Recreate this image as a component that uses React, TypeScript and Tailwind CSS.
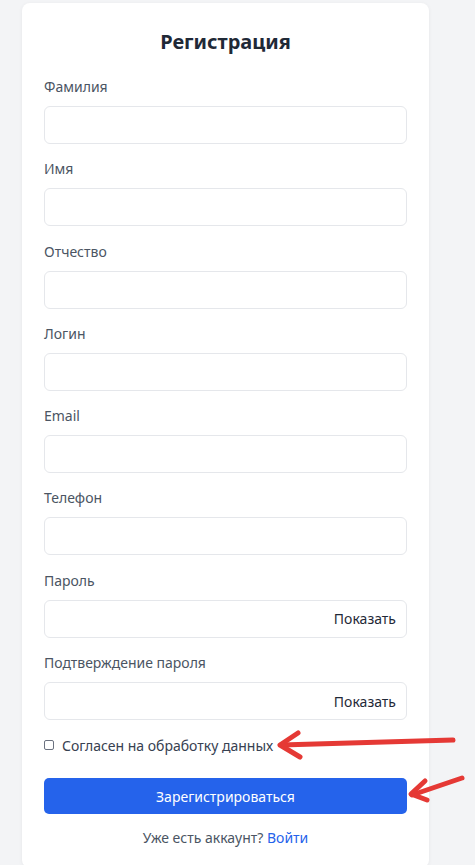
import React from "react";

const fields = ["Фамилия", "Имя", "Отчество", "Логин", "Email", "Телефон"];

function Field({ label, password }: { label: string; password?: boolean }) {
  return (
    <div className="flex flex-col mb-[15.3px]">
      <label className="text-[14px] leading-[20px] text-[#4b5563] mb-[9px]">{label}</label>
      <div className="h-[38px] w-full rounded-[6px] border border-[#e5e7eb] bg-white flex items-center justify-end pr-[10px]">
        {password && <span className="text-[14px] text-[#1f2937]">Показать</span>}
      </div>
    </div>
  );
}

export default function App() {
  return (
    <div
      className="relative min-h-[865px] w-[475px] bg-[#f3f4f6] overflow-hidden"
      style={{ fontFamily: '"Noto Sans", "Open Sans", sans-serif' }}
    >
      <div className="ml-[22px] mt-[3px] w-[407px] bg-white rounded-[8px] shadow-[0_1px_4px_rgba(0,0,0,0.06)] px-[22px] pt-[25px] pb-[20px]">
        <h1 className="text-center text-[20px] leading-[28px] font-bold text-[#1f2937] mb-[21px]">Регистрация</h1>
        {fields.map((f) => (
          <Field key={f} label={f} />
        ))}
        <Field label="Пароль" password />
        <Field label="Подтверждение пароля" password />
        <div className="flex items-center h-[20px] mt-[1px]">
          <span className="w-[10px] h-[10px] border border-[#6b7280] rounded-[2px] mr-[8px] ml-[0px]" />
          <span className="text-[14px] text-[#374151]">Согласен на обработку данных</span>
        </div>
        <button className="mt-[23px] w-full h-[36px] rounded-[5px] bg-[#2563eb] text-white text-[14px] flex items-center justify-center">
          Зарегистрироваться
        </button>
        <div className="mt-[14px] text-center text-[14px] leading-[20px] text-[#4b5563]">
          Уже есть аккаунт? <span className="text-[#2563eb]">Войти</span>
        </div>
      </div>
      <svg className="absolute left-0 top-0 pointer-events-none" width="475" height="865">
        <g stroke="#e53935" strokeWidth="5" strokeLinecap="round" strokeLinejoin="round" fill="none">
          <path d="M453 740 L281 745" />
          <path d="M298 733 L280 745 L300 757" />
          <path d="M462 778 L412 795" />
          <path d="M425 781 L411 794 L427 800" />
        </g>
      </svg>
    </div>
  );
}
